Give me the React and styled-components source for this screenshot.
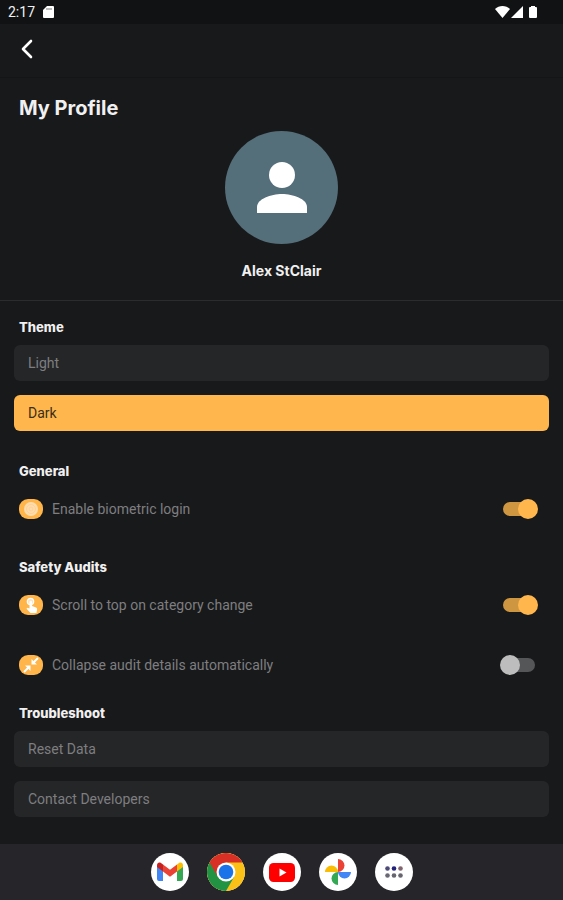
import { useState } from "react";
import styled, { createGlobalStyle } from "styled-components";

const App = () => {
  const [theme, setTheme] = useState("Dark");

  return (
    <Page>
      <GlobalStyle />
      <StatusBar>
        <span>2:17</span>
        <svg width="11" height="12" viewBox="0 0 11 12">
          <path d="M4 0h6a1 1 0 0 1 1 1v10a1 1 0 0 1-1 1H1a1 1 0 0 1-1-1V4z" fill="#fff" />
          <path d="M4 2v2M6 2v2M8 2v2" stroke="#777" />
        </svg>
        <StatusIcons />
      </StatusBar>
      <TopBar>
        <BackButton aria-label="Back">
          <svg width="14" height="20" viewBox="0 0 14 20">
            <path d="M11 2L3 10l8 8" fill="none" stroke="#fff" strokeWidth="2.6" strokeLinecap="round" strokeLinejoin="round" />
          </svg>
        </BackButton>
      </TopBar>
      <Profile>
        <h1>My Profile</h1>
        <Avatar>
          <svg width="52" height="52" viewBox="0 0 52 52" fill="#fff">
            <circle cx="26" cy="13" r="13" />
            <path d="M1 51v-6c0-8 14-13 25-13s25 5 25 13v6z" />
          </svg>
        </Avatar>
        <p>Alex StClair</p>
      </Profile>
      <Settings>
        <Section $space={31}>
          <h2>Theme</h2>
          <ButtonList>
            {["Light", "Dark"].map((name) => (
              <OptionButton
                key={name}
                $active={theme === name}
                aria-pressed={theme === name}
                onClick={() => setTheme(name)}
              >
                {name}
              </OptionButton>
            ))}
          </ButtonList>
        </Section>
        <Section $space={29}>
          <h2>General</h2>
          <ToggleRow id="biometric" label="Enable biometric login" icon={<FingerIcon />} on />
        </Section>
        <Section $space={19}>
          <h2>Safety Audits</h2>
          <ToggleList>
            <ToggleRow id="scroll" label="Scroll to top on category change" icon={<TouchIcon />} on />
            <ToggleRow id="collapse" label="Collapse audit details automatically" icon={<CollapseIcon />} />
          </ToggleList>
        </Section>
        <Section $space={19}>
          <h2>Troubleshoot</h2>
          <ButtonList>
            <OptionButton>Reset Data</OptionButton>
            <OptionButton>Contact Developers</OptionButton>
          </ButtonList>
        </Section>
      </Settings>
      <Dock>
        <DockButton aria-label="Gmail"><GmailLogo /></DockButton>
        <DockButton aria-label="Chrome"><ChromeLogo /></DockButton>
        <DockButton aria-label="YouTube"><YoutubeLogo /></DockButton>
        <DockButton aria-label="Photos"><PhotosLogo /></DockButton>
        <DockButton aria-label="All apps"><AppsIcon /></DockButton>
      </Dock>
    </Page>
  );
};

const ToggleRow = ({ id, label, icon, on = false }) => {
  const [checked, setChecked] = useState(on);

  return (
    <Row>
      <IconChip>{icon}</IconChip>
      <label htmlFor={id}>{label}</label>
      <Switch id={id} type="checkbox" checked={checked} onChange={() => setChecked(!checked)} />
    </Row>
  );
};

const StatusIcons = () => (
  <svg className="right" width="44" height="14" viewBox="0 0 44 14" fill="#fff">
    <path d="M0 4C4 0 11 0 15 4L7.500 13z" />
    <path d="M28 1v12H16z" />
    <path d="M36 1h4v1h1a1 1 0 0 1 1 1v9a1 1 0 0 1-1 1h-6a1 1 0 0 1-1-1V3a1 1 0 0 1 1-1h1z" />
  </svg>
);

const FingerIcon = () => (
  <svg width="16" height="16" viewBox="0 0 16 16">
    <circle cx="8" cy="8" r="7" fill="#ffdcae" />
    <g fill="none" stroke="#ffd093" strokeWidth="1">
      <circle cx="8" cy="8" r="4.500" />
      <circle cx="8" cy="8" r="2" />
    </g>
  </svg>
);

const TouchIcon = () => (
  <svg width="16" height="18" viewBox="0 0 16 18">
    <circle cx="7.500" cy="5.500" r="3.200" fill="#ffe3ba" stroke="#fff" strokeWidth="1.200" />
    <path d="M6.500 6a1.300 1.300 0 0 1 2.600 0v4l4 1.500q1.200.5 1 2L13.500 17H7.500l-4-4.200 1-1 2 .8z" fill="#fff" />
  </svg>
);

const CollapseIcon = () => (
  <svg width="18" height="18" viewBox="0 0 18 18">
    <path d="M16 2l-5 5M2 16l5-5" stroke="#fff" strokeWidth="2" />
    <path d="M9.500 3v5.500H15zM3 9.500h5.500V15z" fill="#fff" />
  </svg>
);

const GmailLogo = () => (
  <svg width="26" height="20" viewBox="0 0 26 20">
    <path d="M0 4l6 4.500V19H2a2 2 0 0 1-2-2z" fill="#4285f4" />
    <path d="M26 4l-6 4.500V19h4a2 2 0 0 0 2-2z" fill="#34a853" />
    <path d="M20 2.500L22 1c2-1.300 4 0 4 2.400V5l-6 4.500z" fill="#fbbc04" />
    <path d="M6 2.500l7 5.200 7-5.200v7l-7 5.300-7-5.300z" fill="#ea4335" />
    <path d="M0 5V3.400C0 1 2-.3 4 1l2 1.500v7z" fill="#c5221f" />
  </svg>
);

const ChromeLogo = () => (
  <svg width="38" height="38" viewBox="0 0 38 38">
    <circle cx="19" cy="19" r="19" fill="#fbc116" />
    <path d="M19 19L2.550 9.500A19 19 0 0 0 19 38l8.200-14.300z" fill="#229342" />
    <path d="M2.550 9.500A19 19 0 0 1 35.450 9.500H19L10.800 23.750z" fill="#d93025" />
    <circle cx="19" cy="19" r="9.500" fill="#fff" />
    <circle cx="19" cy="19" r="7.300" fill="#1a73e8" />
  </svg>
);

const YoutubeLogo = () => (
  <svg width="26" height="19" viewBox="0 0 26 19">
    <rect width="26" height="19" rx="4.500" fill="#f00" />
    <path d="M10.500 5.500v8l7-4z" fill="#fff" />
  </svg>
);

const PhotosLogo = () => (
  <svg width="26" height="26" viewBox="0 0 26 26">
    <path d="M13 0a6.500 6.500 0 0 1 0 13z" fill="#ea4335" />
    <path d="M26 13a6.500 6.500 0 0 1-13 0z" fill="#4285f4" />
    <path d="M13 26a6.500 6.500 0 0 1 0-13z" fill="#34a853" />
    <path d="M0 13a6.500 6.500 0 0 1 13 0z" fill="#fbbc04" />
  </svg>
);

const AppsIcon = () => (
  <svg width="18" height="12" viewBox="0 0 18 12">
    <circle cx="2.500" cy="2.500" r="2.300" fill="#4d4a78" />
    <circle cx="9" cy="2.500" r="2.300" fill="#23237c" />
    <circle cx="15.500" cy="2.500" r="2.300" fill="#80646f" />
    <circle cx="2.500" cy="9.500" r="2.300" fill="#696773" />
    <circle cx="9" cy="9.500" r="2.300" fill="#65646f" />
    <circle cx="15.500" cy="9.500" r="2.300" fill="#65646f" />
  </svg>
);

const GlobalStyle = createGlobalStyle`
  * {
    box-sizing: border-box;
  }
  body {
    margin: 0;
    background: #18191b;
  }
  h1, h2, p {
    margin: 0;
  }
  button {
    border: none;
    font: inherit;
    cursor: pointer;
  }
`;

const Page = styled.div`
  min-height: 100vh;
  display: flex;
  flex-direction: column;
  background: #18191b;
  color: #f0f0f0;
  font-family: Roboto, sans-serif;
  font-size: 14px;
`;

const StatusBar = styled.div`
  display: flex;
  align-items: center;
  gap: 8px;
  height: 24px;
  padding: 0 24px 0 8px;
  background: #111213;
  .right {
    margin-left: auto;
  }
`;

const TopBar = styled.header`
  display: flex;
  align-items: center;
  height: 54px;
  padding: 0 14px 3px;
  border-bottom: 1px solid #141517;
`;

const BackButton = styled.button`
  display: flex;
  padding: 6px;
  background: none;
`;

const Profile = styled.section`
  display: flex;
  flex-direction: column;
  align-items: center;
  padding: 17px 19px 20px;
  border-bottom: 1px solid #2b2c2e;
  font-family: Inter, sans-serif;
  font-weight: 800;
  h1 {
    align-self: flex-start;
    margin-bottom: 9px;
    font-size: 20px;
    line-height: 27px;
  }
  p {
    font-size: 14px;
    font-weight: 700;
    line-height: 18px;
  }
`;

const Avatar = styled.div`
  display: flex;
  justify-content: center;
  align-items: center;
  width: 113px;
  height: 113px;
  margin-bottom: 18px;
  border-radius: 50%;
  background: #546e7a;
`;

const Settings = styled.main`
  padding: 17px 14px 0;
`;

const Section = styled.section`
  margin-bottom: ${(props) => props.$space}px;
  h2 {
    margin-bottom: 9px;
    padding-left: 5px;
    font-family: Inter, sans-serif;
    font-size: 13px;
    font-weight: 800;
    line-height: 18px;
  }
`;

const ButtonList = styled.div`
  display: flex;
  flex-direction: column;
  gap: 14px;
`;

const OptionButton = styled.button`
  height: 36px;
  padding: 0 14px;
  border-radius: 6px;
  text-align: left;
  background: ${(props) => (props.$active ? "#ffb74d" : "#252628")};
  color: ${(props) => (props.$active ? "#3a2e1c" : "#7e7e80")};
`;

const ToggleList = styled.div`
  display: flex;
  flex-direction: column;
  gap: 20px;
`;

const Row = styled.div`
  display: flex;
  align-items: center;
  height: 40px;
  padding: 0 11px 0 5px;
  color: #7e7e80;
  label {
    flex: 1;
    padding-left: 9px;
  }
`;

const IconChip = styled.span`
  display: flex;
  justify-content: center;
  align-items: center;
  width: 24px;
  height: 20px;
  border-radius: 9px;
  background: #ffb54a;
`;

const Switch = styled.input`
  appearance: none;
  display: flex;
  align-items: center;
  width: 38px;
  height: 20px;
  margin: 0;
  padding: 0 3px;
  cursor: pointer;
  &::before {
    content: "";
    flex: none;
    width: 32px;
    height: 14px;
    border-radius: 7px;
    background: ${(props) => (props.checked ? "#cf9642" : "#555657")};
  }
  &::after {
    content: "";
    flex: none;
    width: 20px;
    height: 20px;
    margin-left: ${(props) => (props.checked ? "-17px" : "-35px")};
    border-radius: 50%;
    background: ${(props) => (props.checked ? "#ffb74d" : "#bdbdbd")};
  }
`;

const Dock = styled.nav`
  display: flex;
  justify-content: center;
  align-items: center;
  gap: 18px;
  height: 56px;
  margin-top: auto;
  background: #26262a;
`;

const DockButton = styled.button`
  display: flex;
  justify-content: center;
  align-items: center;
  width: 38px;
  height: 38px;
  padding: 0;
  border-radius: 50%;
  background: #fff;
`;

export default App;
